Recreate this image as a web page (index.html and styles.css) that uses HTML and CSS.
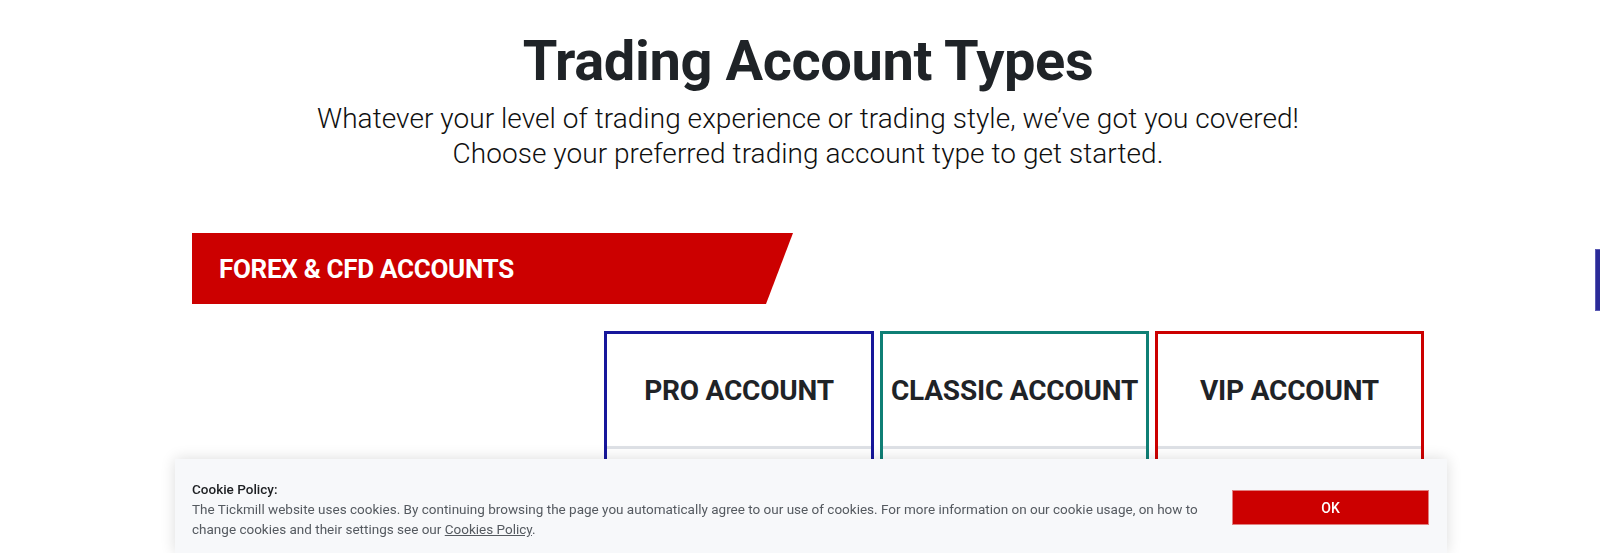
FILE: index.html
```html
<!DOCTYPE html>
<html lang="en">
<head>
<meta charset="utf-8">
<title>Trading Account Types</title>
<link rel="stylesheet" href="styles.css">
</head>
<body>
<main class="page">
  <header class="intro">
    <h1 class="title">Trading Account Types</h1>
    <p class="subtitle">Whatever your level of trading experience or trading style, we’ve got you covered!<br>Choose your preferred trading account type to get started.</p>
  </header>

  <div class="banner"><span class="banner-text">FOREX &amp; CFD ACCOUNTS</span></div>

  <section class="accounts">
    <div class="label-col"></div>
    <div class="card card-pro">
      <div class="card-head">PRO ACCOUNT</div>
      <div class="card-body"></div>
    </div>
    <div class="card card-classic">
      <div class="card-head">CLASSIC ACCOUNT</div>
      <div class="card-body"></div>
    </div>
    <div class="card card-vip">
      <div class="card-head">VIP ACCOUNT</div>
      <div class="card-body"></div>
    </div>
  </section>
</main>

<div class="side-tab"></div>

<div class="cookie-bar">
  <div class="cookie-text">
    <div class="cookie-title">Cookie Policy:</div>
    <p class="cookie-copy">The Tickmill website uses cookies. By continuing browsing the page you automatically agree to our use of cookies. For more information on our cookie usage, on how to change cookies and their settings see our <a href="#" class="cookie-link">Cookies Policy</a>.</p>
  </div>
  <button class="cookie-ok" type="button">OK</button>
</div>
</body>
</html>
```

FILE: styles.css
```css
* { box-sizing: border-box; }

html, body {
  margin: 0;
  padding: 0;
  background: #ffffff;
  font-family: Roboto, "Liberation Sans", Arial, sans-serif;
  color: #212529;
}

body { overflow: hidden; height: 553px; }

.page {
  width: 1232px;
  margin-left: 192px;
}

.intro { text-align: center; }

.title {
  margin: 28px 0 0;
  font-size: 56px;
  line-height: 67px;
  font-weight: 700;
  color: #1f2327;
  letter-spacing: -0.4px;
}

.subtitle {
  margin: 6px 0 0;
  font-size: 28px;
  line-height: 35px;
  font-weight: 300;
  color: #101010;
  letter-spacing: 0.05px;
}

.banner {
  margin-top: 62px;
  width: 601px;
  height: 71px;
  background: #cc0000;
  clip-path: polygon(0 0, 100% 0, 574px 100%, 0 100%);
  display: flex;
  align-items: center;
  padding-left: 27px;
}

.banner-text {
  color: #ffffff;
  font-size: 26px;
  font-weight: 700;
  letter-spacing: -0.3px;
}

.accounts {
  margin-top: 27px;
  display: grid;
  grid-template-columns: 406px 270px 269px 269px;
  column-gap: 6px;
}

.card {
  border: 3px solid #17179b;
  border-bottom: none;
  height: 260px;
  display: flex;
  flex-direction: column;
}

.card-pro { border-color: #17179b; }
.card-classic { border-color: #0f7f75; }
.card-vip { border-color: #cc0000; }

.card-head {
  height: 115px;
  display: flex;
  align-items: center;
  justify-content: center;
  font-size: 28px;
  font-weight: 700;
  color: #1f2327;
  border-bottom: 3px solid #dee1e6;
  white-space: nowrap;
  letter-spacing: -0.2px;
}

.card-body { flex: 1; }

.side-tab {
  position: fixed;
  right: 0;
  top: 249px;
  width: 5px;
  height: 62px;
  background: #2b2b98;
  border: 1px solid #5a5ab3;
  border-right: none;
}

.cookie-bar {
  position: fixed;
  left: 175px;
  right: 153px;
  bottom: 0;
  height: 94px;
  background: #f7f8fa;
  box-shadow: 0 0 14px rgba(0, 0, 0, 0.14);
  display: flex;
  align-items: flex-start;
  padding: 20px 18px 0 17px;
}

.cookie-text {
  width: 1020px;
  font-size: 13.5px;
  line-height: 20px;
  color: #555a60;
}

.cookie-title {
  font-weight: 500;
  color: #1d1f22;
}

.cookie-copy { margin: 0; }

.cookie-link {
  color: #555a60;
  text-decoration: underline;
}

.cookie-ok {
  margin-left: auto;
  margin-top: 11px;
  width: 197px;
  height: 35px;
  background: #cc0000;
  border: 1px solid #e08080;
  color: #ffffff;
  font-family: Roboto, "Liberation Sans", Arial, sans-serif;
  font-size: 14px;
  font-weight: 500;
  cursor: pointer;
}
```
